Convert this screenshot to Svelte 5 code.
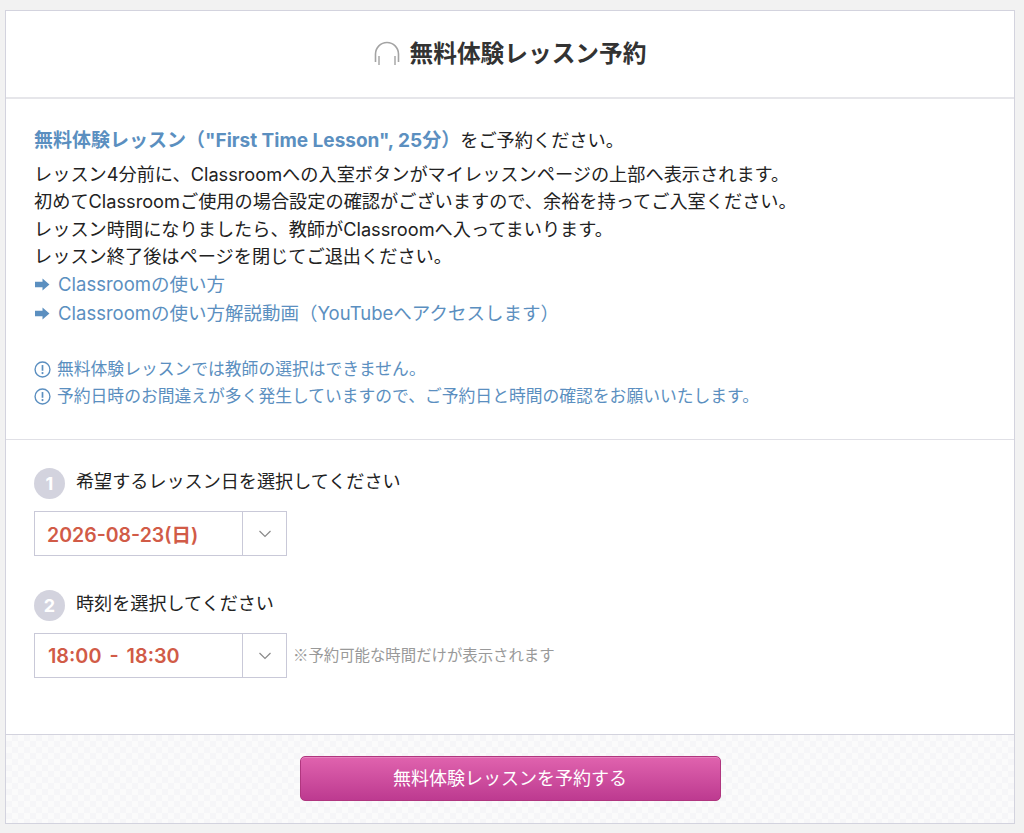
<script>
  const guide = [
    "レッスン4分前に、Classroomへの入室ボタンがマイレッスンページの上部へ表示されます。",
    "初めてClassroomご使用の場合設定の確認がございますので、余裕を持ってご入室ください。",
    "レッスン時間になりましたら、教師がClassroomへ入ってまいります。",
    "レッスン終了後はページを閉じてご退出ください。"
  ];
  const links = ["Classroomの使い方", "Classroomの使い方解説動画（YouTubeへアクセスします）"];
  const notes = [
    "無料体験レッスンでは教師の選択はできません。",
    "予約日時のお間違えが多く発生していますので、ご予約日と時間の確認をお願いいたします。"
  ];
</script>

<div class="card">
  <header class="head">
    <svg class="phones" width="26" height="26" viewBox="0 0 26 26" fill="none" stroke="#a3a3a3" aria-hidden="true">
      <path d="M1.500 21V13a11.500 11.500 0 0 1 23 0v8" stroke-width="1.6"/>
      <path d="M5 15v9M21 15v9" stroke-width="1.4"/>
    </svg>
    <h1>無料体験レッスン予約</h1>
  </header>

  <section class="info">
    <p class="lead"><strong>無料体験レッスン（"First Time Lesson", 25分）</strong>をご予約ください。</p>
    {#each guide as line}
      <p class="line">{line}</p>
    {/each}
    {#each links as link}
      <p class="link">
        <svg width="15" height="13" viewBox="0 0 14 12" aria-hidden="true"><path fill="#5b8fc0" d="M0 3.500h7V0.500l6.500 5.500-6.500 5.500V8.500H0z"/></svg>
        <span>{link}</span>
      </p>
    {/each}
    <div class="notes">
      {#each notes as note}
        <p class="note">
          <svg width="17" height="17" viewBox="0 0 16 16" aria-hidden="true">
            <circle cx="8" cy="8" r="7" fill="none" stroke="#5b8fc0" stroke-width="1.3"/>
            <path d="M8 3.800v5.400" stroke="#5b8fc0" stroke-width="1.6"/>
            <circle cx="8" cy="11.400" r="1" fill="#5b8fc0"/>
          </svg>
          <span>{note}</span>
        </p>
      {/each}
    </div>
  </section>

  <section class="form">
    <div class="step">
      <span class="num">1</span>
      <span class="label">希望するレッスン日を選択してください</span>
    </div>
    <div class="row">
      <div class="select">
        <span class="value">2026-08-23(日)</span>
        <span class="arrow"><svg width="14" height="8" viewBox="0 0 14 8" fill="none" stroke="#8a8a8a" stroke-width="1.2"><path d="M1.500 1l5.500 5.500L12.500 1"/></svg></span>
      </div>
    </div>
    <div class="step second">
      <span class="num">2</span>
      <span class="label">時刻を選択してください</span>
    </div>
    <div class="row">
      <div class="select">
        <span class="value time">18:00 - 18:30</span>
        <span class="arrow"><svg width="14" height="8" viewBox="0 0 14 8" fill="none" stroke="#8a8a8a" stroke-width="1.2"><path d="M1.500 1l5.500 5.500L12.500 1"/></svg></span>
      </div>
      <span class="hint">※予約可能な時間だけが表示されます</span>
    </div>
  </section>

  <footer class="foot">
    <button type="button">無料体験レッスンを予約する</button>
  </footer>
</div>

<style>
  :global(body) {
    background: #f2f2f2;
    font-family: "Inter", "Noto Sans CJK JP", sans-serif;
  }
  .card {
    box-sizing: border-box;
    width: 1010px;
    height: 814px;
    margin: 10px 0 0 5px;
    background: #fff;
    border: 1px solid #d3d3de;
    display: flex;
    flex-direction: column;
    color: #222;
  }
  p { margin: 0; }
  .head {
    height: 88px;
    box-sizing: border-box;
    border-bottom: 2px solid #e6e6ea;
    display: flex;
    align-items: center;
    justify-content: center;
    gap: 10px;
  }
  .head h1 {
    margin: 0;
    padding-bottom: 4px;
    font-size: 23.700px;
    font-weight: 700;
    color: #333;
  }
  .info {
    height: 341px;
    box-sizing: border-box;
    padding: 27px 28px 0;
    border-bottom: 1px solid #e0e0e6;
    font-size: 18.200px;
  }
  .lead { line-height: 28px; margin-bottom: 6px; }
  .lead strong { color: #5b8fc0; font-weight: 700; font-size: 19px; }
  .line { line-height: 27.250px; }
  .link {
    line-height: 29px;
    font-size: 18.500px;
    color: #5b8fc0;
    display: flex;
    align-items: center;
    gap: 8px;
    padding-left: 1px;
  }
  .notes { margin-top: 28px; font-size: 16.800px; color: #5b8fc0; }
  .note {
    line-height: 27px;
    display: flex;
    align-items: center;
    gap: 6px;
  }
  .form {
    flex: 1;
    padding: 28px 28px 0;
    font-size: 18.100px;
  }
  .step {
    display: flex;
    align-items: flex-start;
    gap: 11px;
    height: 32px;
    margin-bottom: 11px;
  }
  .step.second { margin-top: 34px; }
  .label { line-height: 26px; }
  .num {
    width: 31px;
    height: 31px;
    border-radius: 50%;
    background: #d3d3de;
    color: #fff;
    font-weight: 700;
    font-size: 18px;
    display: flex;
    align-items: center;
    justify-content: center;
  }
  .row { display: flex; align-items: center; gap: 6px; }
  .select {
    box-sizing: border-box;
    width: 253px;
    height: 45px;
    border: 1px solid #c9c9d8;
    display: flex;
    align-items: center;
  }
  .value {
    flex: 1;
    padding-left: 12px;
    color: #d15b47;
    font-size: 19.500px;
    font-weight: 600;
  }
  .value.time { padding-left: 13px; word-spacing: 3px; font-size: 19.800px; }
  .arrow {
    width: 43px;
    height: 100%;
    border-left: 1px solid #c9c9d8;
    display: flex;
    align-items: center;
    justify-content: center;
  }
  .hint {
    padding-bottom: 4px;
    font-family: "Noto Sans CJK JP", sans-serif;
    font-size: 15.400px;
    color: #999;
  }
  .foot {
    height: 89px;
    box-sizing: border-box;
    border-top: 1px solid #d3d3de;
    background-color: #f8f8f8;
    background-image: repeating-conic-gradient(#f6f6f8 0 25%, #fbfbfb 0 50%);
    background-size: 12px 12px;
    display: flex;
    justify-content: center;
    padding-top: 21px;
  }
  button {
    width: 421px;
    height: 45px;
    padding-bottom: 5px;
    border: 1px solid #b0367f;
    border-radius: 5px;
    background: linear-gradient(#e063ae, #bd3a90);
    box-shadow: inset 0 1px 0 rgba(255,255,255,.2);
    color: #fff;
    font-family: inherit;
    font-size: 18px;
    cursor: pointer;
  }
</style>
